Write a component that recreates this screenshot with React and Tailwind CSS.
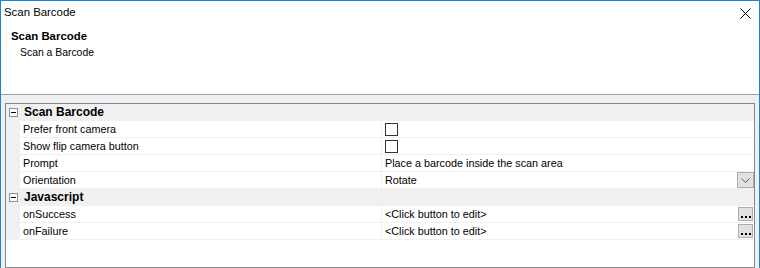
import React from "react";

function Minus() {
  return (
    <div className="ml-[3px] w-[9px] h-[9px] border border-[#919191] bg-white flex items-center justify-center shrink-0">
      <div className="w-[5px] h-[1px] bg-black" />
    </div>
  );
}

function Category({ title }) {
  return (
    <div className="flex items-center h-[17px] bg-[#f0f0f0] border-b border-[#f0f0f0]">
      <Minus />
      <span className="ml-[6px] text-[12px] font-bold leading-none">{title}</span>
    </div>
  );
}

function Checkbox() {
  return <div className="w-[13px] h-[13px] border border-[#333333] bg-white" />;
}

function DropBtn() {
  return (
    <div className="absolute right-0 top-0 w-[17px] h-[16px] bg-[#e1e1e1] border border-[#adadad] flex items-center justify-center">
      <svg width="9" height="5" viewBox="0 0 9 5">
        <path d="M0.5 0.5 L4.5 4.5 L8.5 0.5" fill="none" stroke="#606060" strokeWidth="1" />
      </svg>
    </div>
  );
}

function EllipsisBtn() {
  return (
    <div className="absolute right-[1px] top-[1px] w-[15px] h-[14px] bg-[#e1e1e1] border border-[#adadad] flex items-end justify-center pb-[2px] gap-[2px]">
      <div className="w-[2px] h-[2px] bg-black" />
      <div className="w-[2px] h-[2px] bg-black" />
      <div className="w-[2px] h-[2px] bg-black" />
    </div>
  );
}

function Row({ label, children, extra }) {
  return (
    <div className="flex h-[17px] border-b border-[#f0f0f0]">
      <div className="w-[14px] bg-[#f0f0f0] shrink-0" />
      <div className="w-[362px] shrink-0 pl-[3px] flex items-center border-r border-[#f0f0f0] bg-white">
        <span className="text-[10.8px] leading-none">{label}</span>
      </div>
      <div className="flex-1 relative flex items-center pl-[3px] bg-white">
        {children}
        {extra}
      </div>
    </div>
  );
}

export default function App() {
  return (
    <div className="w-[760px] h-[268px] overflow-hidden bg-[#f0f0f0] border-x border-t border-[#1883d7] flex flex-col font-['Liberation_Sans',Arial,sans-serif] text-black">
      <div className="bg-white h-[94px] shrink-0 border-b border-[#a0a0a0] flex flex-col">
        <div className="h-[23px] flex items-center justify-between pl-[3px] pr-[8px]">
          <span className="text-[11.4px] leading-none">Scan Barcode</span>
          <svg width="11" height="11" viewBox="0 0 11 11" className="mt-[2px]">
            <path d="M0.5 0.5 L10.5 10.5 M10.5 0.5 L0.5 10.5" stroke="#000" strokeWidth="1" />
          </svg>
        </div>
        <div className="mt-[5px] pl-[10px] flex flex-col">
          <div className="h-[16px] flex items-center">
            <span className="text-[11.4px] font-bold leading-none">Scan Barcode</span>
          </div>
          <div className="h-[16px] flex items-center pl-[9px]">
            <span className="text-[10.4px] leading-none">Scan a Barcode</span>
          </div>
        </div>
      </div>
      <div className="flex-1 pt-[8px] px-[4px] flex flex-col">
        <div className="flex-1 border border-[#828790] bg-white flex flex-col">
          <Category title="Scan Barcode" />
          <Row label="Prefer front camera">
            <Checkbox />
          </Row>
          <Row label="Show flip camera button">
            <Checkbox />
          </Row>
          <Row label="Prompt">
            <span className="text-[10.8px] leading-none">Place a barcode inside the scan area</span>
          </Row>
          <Row label="Orientation" extra={<DropBtn />}>
            <span className="text-[10.8px] leading-none">Rotate</span>
          </Row>
          <Category title="Javascript" />
          <Row label="onSuccess" extra={<EllipsisBtn />}>
            <span className="text-[10.8px] leading-none">&lt;Click button to edit&gt;</span>
          </Row>
          <Row label="onFailure" extra={<EllipsisBtn />}>
            <span className="text-[10.8px] leading-none">&lt;Click button to edit&gt;</span>
          </Row>
        </div>
      </div>
    </div>
  );
}
